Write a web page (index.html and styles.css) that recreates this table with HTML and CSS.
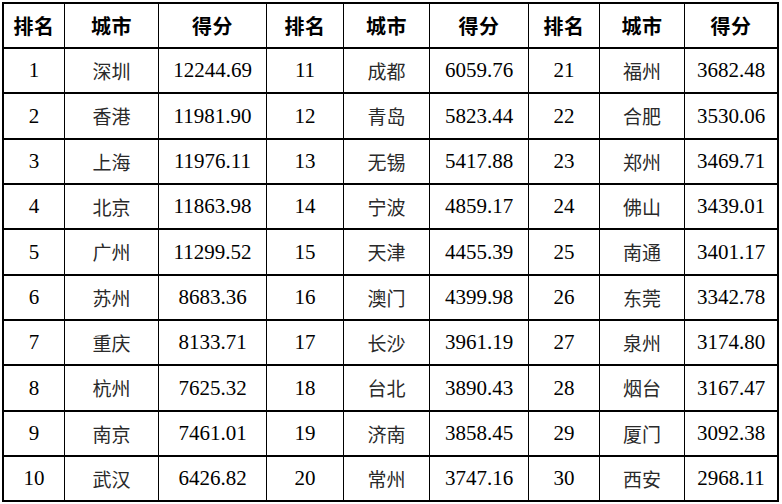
FILE: index.html
```html
<!DOCTYPE html>
<html lang="zh-CN">
<head>
<meta charset="utf-8">
<title>城市得分排名</title>
<link rel="stylesheet" href="styles.css">
</head>
<body>
<div class="rank" role="table">
  <div class="hd">排名</div><div class="hd">城市</div><div class="hd">得分</div>
  <div class="hd">排名</div><div class="hd">城市</div><div class="hd">得分</div>
  <div class="hd">排名</div><div class="hd">城市</div><div class="hd">得分</div>

  <div class="num">1</div><div class="city">深圳</div><div class="num">12244.69</div><div class="num">11</div><div class="city">成都</div><div class="num">6059.76</div><div class="num">21</div><div class="city">福州</div><div class="num">3682.48</div>
  <div class="num">2</div><div class="city">香港</div><div class="num">11981.90</div><div class="num">12</div><div class="city">青岛</div><div class="num">5823.44</div><div class="num">22</div><div class="city">合肥</div><div class="num">3530.06</div>
  <div class="num">3</div><div class="city">上海</div><div class="num">11976.11</div><div class="num">13</div><div class="city">无锡</div><div class="num">5417.88</div><div class="num">23</div><div class="city">郑州</div><div class="num">3469.71</div>
  <div class="num">4</div><div class="city">北京</div><div class="num">11863.98</div><div class="num">14</div><div class="city">宁波</div><div class="num">4859.17</div><div class="num">24</div><div class="city">佛山</div><div class="num">3439.01</div>
  <div class="num">5</div><div class="city">广州</div><div class="num">11299.52</div><div class="num">15</div><div class="city">天津</div><div class="num">4455.39</div><div class="num">25</div><div class="city">南通</div><div class="num">3401.17</div>
  <div class="num">6</div><div class="city">苏州</div><div class="num">8683.36</div><div class="num">16</div><div class="city">澳门</div><div class="num">4399.98</div><div class="num">26</div><div class="city">东莞</div><div class="num">3342.78</div>
  <div class="num">7</div><div class="city">重庆</div><div class="num">8133.71</div><div class="num">17</div><div class="city">长沙</div><div class="num">3961.19</div><div class="num">27</div><div class="city">泉州</div><div class="num">3174.80</div>
  <div class="num">8</div><div class="city">杭州</div><div class="num">7625.32</div><div class="num">18</div><div class="city">台北</div><div class="num">3890.43</div><div class="num">28</div><div class="city">烟台</div><div class="num">3167.47</div>
  <div class="num">9</div><div class="city">南京</div><div class="num">7461.01</div><div class="num">19</div><div class="city">济南</div><div class="num">3858.45</div><div class="num">29</div><div class="city">厦门</div><div class="num">3092.38</div>
  <div class="num">10</div><div class="city">武汉</div><div class="num">6426.82</div><div class="num">20</div><div class="city">常州</div><div class="num">3747.16</div><div class="num">30</div><div class="city">西安</div><div class="num">2968.11</div>
</div>
</body>
</html>
```
FILE: styles.css
```css
html, body {
  margin: 0;
  padding: 0;
  background: #ffffff;
}
body {
  padding: 2px;
}
.rank {
  display: grid;
  width: 773px;
  grid-template-columns: 60px 93px 107px 76px 85px 98px 70px 84px 92px;
  grid-template-rows: 43px 43px 44px 43px 43px 44px 43px 43px 44px 43px 43px;
  column-gap: 1px;
  row-gap: 2px;
  border: 2px solid #000;
  background: #000;
}
.rank > div {
  background: #ffffff;
  display: flex;
  align-items: center;
  justify-content: center;
  color: #000;
  white-space: nowrap;
}
.hd {
  font-family: "Noto Sans CJK SC", sans-serif;
  font-weight: 700;
  font-size: 20px;
  line-height: 20px;
  letter-spacing: 0.5px;
}
.num {
  font-family: "Liberation Serif", "Times New Roman", serif;
  font-size: 21px;
  line-height: 21px;
}
.city {
  font-family: "Noto Sans CJK SC", sans-serif;
  font-weight: 400;
  font-size: 19px;
  line-height: 20px;
  color: #2a2a2a !important;
}
```
